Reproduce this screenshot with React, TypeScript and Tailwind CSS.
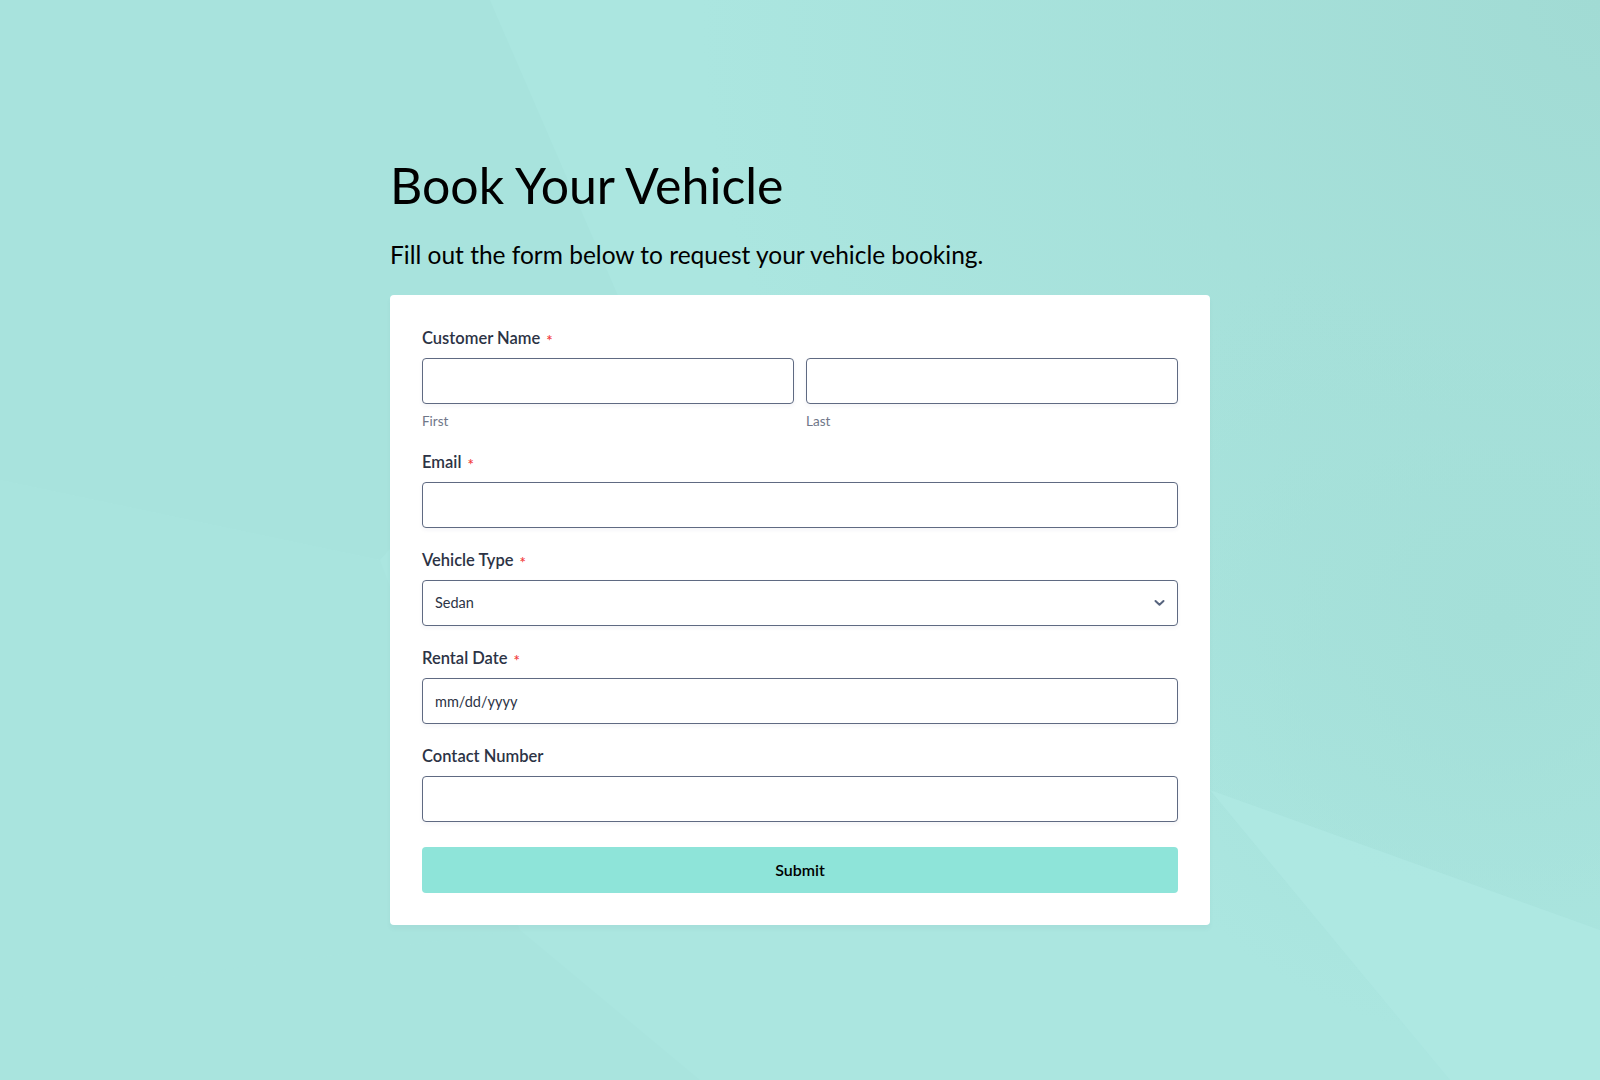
import React from "react";

function Req() {
  return (
    <span className="relative top-[2px] ml-[6px] text-[15px] leading-[0] text-[#f23a3c]">*</span>
  );
}

function Label({ children, required }: { children: React.ReactNode; required?: boolean }) {
  return (
    <label className="block h-[24px] text-[16.5px] leading-[24px] font-semibold text-[#2c3345]">
      {children}
      {required && <Req />}
    </label>
  );
}

const inputCls =
  "block w-full h-[46px] rounded-[4px] border border-[#5f6a82] bg-white px-3 text-[14.5px] text-[#2c3345] outline-none shadow-[0_2px_4px_rgba(37,45,91,0.05)]";

export default function App() {
  return (
    <div className="relative min-h-screen w-full overflow-hidden bg-[#aae5df] font-['Lato',sans-serif]">
      {/* background facets */}
      <svg
        className="absolute inset-0 h-full w-full"
        viewBox="0 0 1600 1080"
        preserveAspectRatio="none"
        aria-hidden="true"
      >
        <defs>
          <radialGradient id="tr" cx="1600" cy="0" r="900" gradientUnits="userSpaceOnUse">
            <stop offset="0" stopColor="#a1dbd4" stopOpacity="1" />
            <stop offset="1" stopColor="#a1dbd4" stopOpacity="0" />
          </radialGradient>
          <radialGradient id="rm" cx="1500" cy="620" r="420" gradientUnits="userSpaceOnUse">
            <stop offset="0" stopColor="#a4dfd8" stopOpacity="1" />
            <stop offset="1" stopColor="#a4dfd8" stopOpacity="0" />
          </radialGradient>
        </defs>
        <polygon points="0,0 490,0 620,300 380,560 0,480" fill="#a8e3dd" />
        <polygon points="490,0 1600,0 1600,1080 0,1080 0,480 380,560 620,300" fill="#abe6e0" />
        <polygon points="0,480 380,560 520,930 0,1000" fill="#a9e4de" />
        <rect x="0" y="0" width="1600" height="1080" fill="url(#tr)" />
        <rect x="0" y="0" width="1600" height="1080" fill="url(#rm)" />
        <polygon points="1210,790 1600,930 1600,1080 1450,1080" fill="#aee8e2" opacity="0.9" />
        <polygon points="0,1000 520,930 700,1080 0,1080" fill="#a9e4de" />
      </svg>

      <div className="relative mx-auto w-[820px] pt-[155px] pb-[150px]">
        <h1 className="text-[50px] leading-[60px] font-normal text-black">Book Your Vehicle</h1>
        <p className="mt-[24px] text-[24.5px] leading-[32px] text-black">
          Fill out the form below to request your vehicle booking.
        </p>

        <form
          className="mt-[24px] rounded-[4px] bg-white px-[32px] pt-[31px] pb-[32px] shadow-[0_4px_4px_rgba(87,100,126,0.05)]"
          onSubmit={(e) => e.preventDefault()}
        >
          <div className="mb-[20px]">
            <Label required>Customer Name</Label>
            <div className="mt-[8px] grid grid-cols-2 gap-[12px]">
              <div>
                <input className={inputCls} />
                <div className="mt-[8px] text-[13.5px] leading-[18px] text-[#6f7789]">First</div>
              </div>
              <div>
                <input className={inputCls} />
                <div className="mt-[8px] text-[13.5px] leading-[18px] text-[#6f7789]">Last</div>
              </div>
            </div>
          </div>

          <div className="mb-[20px]">
            <Label required>Email</Label>
            <input type="email" className={`mt-[8px] ${inputCls}`} />
          </div>

          <div className="mb-[20px]">
            <Label required>Vehicle Type</Label>
            <div className="relative mt-[8px]">
              <select className={`${inputCls} appearance-none pr-10`} defaultValue="Sedan">
                <option>Sedan</option>
                <option>SUV</option>
                <option>Truck</option>
                <option>Van</option>
              </select>
              <svg
                className="pointer-events-none absolute right-[13px] top-1/2 -translate-y-1/2"
                width="11"
                height="7"
                viewBox="0 0 11 7"
                fill="none"
              >
                <path d="M1.5 1.5 5.5 5.3 9.5 1.5" stroke="#57647e" strokeWidth="2" strokeLinecap="round" strokeLinejoin="round" />
              </svg>
            </div>
          </div>

          <div className="mb-[20px]">
            <Label required>Rental Date</Label>
            <input
              className={`mt-[8px] ${inputCls} placeholder:text-[#2c3345]`}
              placeholder="mm/dd/yyyy"
            />
          </div>

          <div className="mb-[25px]">
            <Label>Contact Number</Label>
            <input type="tel" className={`mt-[8px] ${inputCls}`} />
          </div>

          <button
            type="submit"
            className="block h-[46px] w-full rounded-[4px] bg-[#8ee4d9] text-[16px] font-semibold text-black"
          >
            Submit
          </button>
        </form>
      </div>
    </div>
  );
}
